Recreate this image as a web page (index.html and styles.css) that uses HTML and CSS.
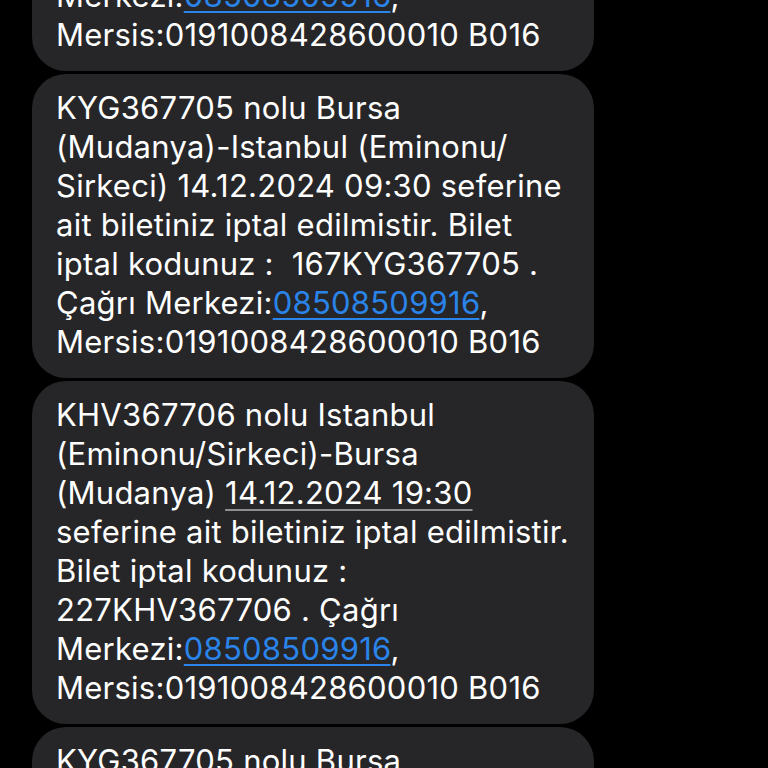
FILE: index.html
```html
<!DOCTYPE html>
<html lang="tr">
<head>
<meta charset="utf-8">
<title>Mesajlar</title>
<link rel="stylesheet" href="styles.css">
</head>
<body>
<main class="thread">
  <div class="bubble">
    KHV367706 nolu Istanbul<br>
    (Eminonu/Sirkeci)-Bursa<br>
    (Mudanya) <span class="date">14.12.2024 19:30</span><br>
    seferine ait biletiniz iptal edilmistir.<br>
    Bilet iptal kodunuz :<br>
    227KHV367706 . Çağrı<br>
    Merkezi:<a class="link" href="#">08508509916</a>,<br>
    Mersis:0191008428600010 B016
  </div>
  <div class="bubble">
    KYG367705 nolu Bursa<br>
    (Mudanya)-Istanbul (Eminonu/<br>
    Sirkeci) 14.12.2024 09:30 seferine<br>
    ait biletiniz iptal edilmistir. Bilet<br>
    iptal kodunuz :&nbsp; 167KYG367705 .<br>
    Çağrı Merkezi:<a class="link" href="#">08508509916</a>,<br>
    Mersis:0191008428600010 B016
  </div>
  <div class="bubble">
    KHV367706 nolu Istanbul<br>
    (Eminonu/Sirkeci)-Bursa<br>
    (Mudanya) <span class="date">14.12.2024 19:30</span><br>
    seferine ait biletiniz iptal edilmistir.<br>
    Bilet iptal kodunuz :<br>
    227KHV367706 . Çağrı<br>
    Merkezi:<a class="link" href="#">08508509916</a>,<br>
    Mersis:0191008428600010 B016
  </div>
  <div class="bubble">
    KYG367705 nolu Bursa<br>
    (Mudanya)-Istanbul (Eminonu/<br>
    Sirkeci) 14.12.2024 09:30 seferine<br>
    ait biletiniz iptal edilmistir. Bilet<br>
    iptal kodunuz :&nbsp; 167KYG367705 .<br>
    Çağrı Merkezi:<a class="link" href="#">08508509916</a>,<br>
    Mersis:0191008428600010 B016
  </div>
</main>
</body>
</html>
```

FILE: styles.css
```css
html, body {
  margin: 0;
  padding: 0;
  background: #000;
  height: 100%;
  overflow: hidden;
}

.thread {
  display: flex;
  flex-direction: column;
  gap: 3px;
  margin-top: -272px;
  padding-left: 32px;
}

.bubble {
  width: 562px;
  box-sizing: border-box;
  background: #262628;
  border-radius: 34px;
  padding: 14px 10px 17px 24px;
  color: #fff;
  font-family: Inter, "Noto Sans", sans-serif;
  font-size: 31px;
  letter-spacing: 0.25px;
  line-height: 39px;
  white-space: nowrap;
}

.link {
  color: #2a84ea;
  text-decoration: underline;
  text-decoration-thickness: 2px;
  text-underline-offset: 4px;
}

.date {
  text-decoration: underline;
  text-decoration-color: #8e8e93;
  text-decoration-thickness: 2px;
  text-underline-offset: 5px;
}
```
